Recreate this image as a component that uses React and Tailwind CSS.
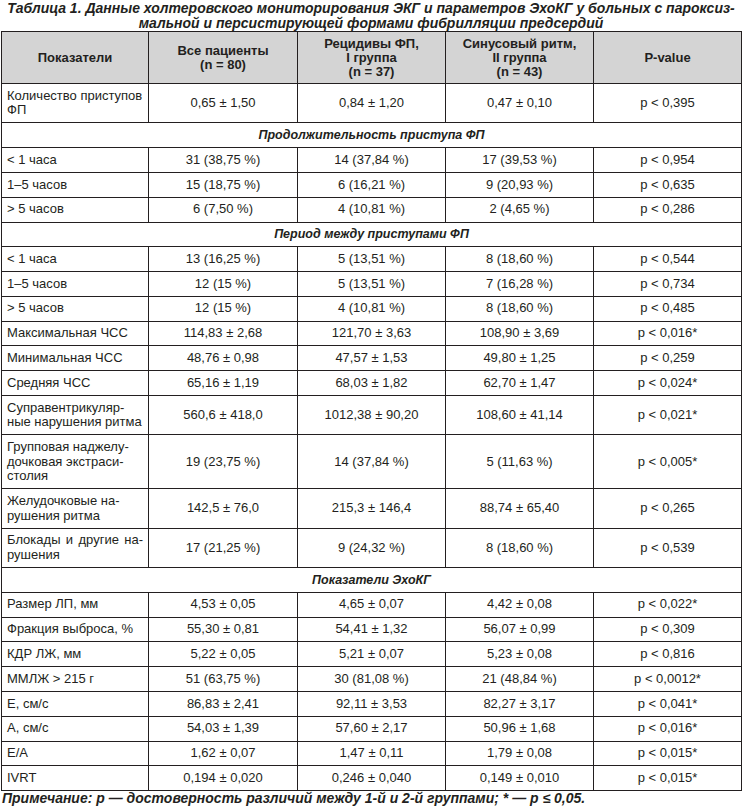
const header = [
  ['Показатели'],
  ['Все пациенты', '(n = 80)'],
  ['Рецидивы ФП,', 'I группа', '(n = 37)'],
  ['Синусовый ритм,', 'II группа', '(n = 43)'],
  ['P-value'],
]

const rows = [
  { label: ['Количество приступов', 'ФП'], v: ['0,65 ± 1,50', '0,84 ± 1,20', '0,47 ± 0,10', 'p < 0,395'] },
  { section: 'Продолжительность приступа ФП' },
  { label: ['< 1 часа'], v: ['31 (38,75 %)', '14 (37,84 %)', '17 (39,53 %)', 'p < 0,954'] },
  { label: ['1–5 часов'], v: ['15 (18,75 %)', '6 (16,21 %)', '9 (20,93 %)', 'p < 0,635'] },
  { label: ['> 5 часов'], v: ['6 (7,50 %)', '4 (10,81 %)', '2 (4,65 %)', 'p < 0,286'] },
  { section: 'Период между приступами ФП' },
  { label: ['< 1 часа'], v: ['13 (16,25 %)', '5 (13,51 %)', '8 (18,60 %)', 'p < 0,544'] },
  { label: ['1–5 часов'], v: ['12 (15 %)', '5 (13,51 %)', '7 (16,28 %)', 'p < 0,734'] },
  { label: ['> 5 часов'], v: ['12 (15 %)', '4 (10,81 %)', '8 (18,60 %)', 'p < 0,485'] },
  { label: ['Максимальная ЧСС'], v: ['114,83 ± 2,68', '121,70 ± 3,63', '108,90 ± 3,69', 'p < 0,016*'] },
  { label: ['Минимальная ЧСС'], v: ['48,76 ± 0,98', '47,57 ± 1,53', '49,80 ± 1,25', 'p < 0,259'] },
  { label: ['Средняя ЧСС'], v: ['65,16 ± 1,19', '68,03 ± 1,82', '62,70 ± 1,47', 'p < 0,024*'] },
  { label: ['Суправентрикуляр-', 'ные нарушения ритма'], v: ['560,6 ± 418,0', '1012,38 ± 90,20', '108,60 ± 41,14', 'p < 0,021*'] },
  { label: ['Групповая наджелу-', 'дочковая экстраси-', 'столия'], v: ['19 (23,75 %)', '14 (37,84 %)', '5 (11,63 %)', 'p < 0,005*'] },
  { label: ['Желудочковые на-', 'рушения ритма'], v: ['142,5 ± 76,0', '215,3 ± 146,4', '88,74 ± 65,40', 'p < 0,265'] },
  { label: ['Блокады и другие на-', 'рушения'], justify: true, v: ['17 (21,25 %)', '9 (24,32 %)', '8 (18,60 %)', 'p < 0,539'] },
  { section: 'Показатели ЭхоКГ' },
  { label: ['Размер ЛП, мм'], v: ['4,53 ± 0,05', '4,65 ± 0,07', '4,42 ± 0,08', 'p < 0,022*'] },
  { label: ['Фракция выброса, %'], v: ['55,30 ± 0,81', '54,41 ± 1,32', '56,07 ± 0,99', 'p < 0,309'] },
  { label: ['КДР ЛЖ, мм'], v: ['5,22 ± 0,05', '5,21 ± 0,07', '5,23 ± 0,08', 'p < 0,816'] },
  { label: ['ММЛЖ > 215 г'], v: ['51 (63,75 %)', '30 (81,08 %)', '21 (48,84 %)', 'p < 0,0012*'] },
  { label: ['E, см/с'], v: ['86,83 ± 2,41', '92,11 ± 3,53', '82,27 ± 3,17', 'p < 0,041*'] },
  { label: ['A, см/с'], v: ['54,03 ± 1,39', '57,60 ± 2,17', '50,96 ± 1,68', 'p < 0,016*'] },
  { label: ['E/A'], v: ['1,62 ± 0,07', '1,47 ± 0,11', '1,79 ± 0,08', 'p < 0,015*'] },
  { label: ['IVRT'], v: ['0,194 ± 0,020', '0,246 ± 0,040', '0,149 ± 0,010', 'p < 0,015*'] },
]

const cell = 'border border-[#231f20] px-[5px] py-[4.6px] leading-[14.6px] align-middle'

export default function App() {
  return (
    <div className="w-[742px] bg-white text-[#231f20] font-['Liberation_Sans',Arial,sans-serif]">
      {/* заголовок таблицы */}
      <div className="flex h-[31px] flex-col items-center pt-[1px] text-[14px] leading-[15px] font-bold italic whitespace-nowrap">
        <span>Таблица 1. Данные холтеровского мониторирования ЭКГ и параметров ЭхоКГ у больных с пароксиз-</span>
        <span>мальной и персистирующей формами фибрилляции предсердий</span>
      </div>

      <table className="ml-[1px] w-[740px] table-fixed border-collapse text-[13px]">
        <colgroup>
          <col className="w-[147px]" />
          <col className="w-[149px]" />
          <col className="w-[148px]" />
          <col className="w-[148px]" />
          <col className="w-[148px]" />
        </colgroup>
        <thead>
          <tr className="h-[52px] bg-[#d4d4d4]">
            {header.map((lines, i) => (
              <th key={i} className="border border-[#231f20] px-[5px] align-middle text-center text-[13px] leading-[14px] font-bold">
                {lines.map((l, j) => (
                  <div key={j}>{l}</div>
                ))}
              </th>
            ))}
          </tr>
        </thead>
        <tbody>
          {rows.map((r, i) =>
            r.section ? (
              <tr key={i}>
                <td colSpan={5} className={`${cell} text-center text-[12.5px] font-bold italic`}>
                  {r.section}
                </td>
              </tr>
            ) : (
              <tr key={i}>
                <td className={`${cell} text-left`}>
                  {r.label.map((l, j) => (
                    <div key={j} className={r.justify && j === 0 ? 'text-justify [text-align-last:justify]' : ''}>
                      {l}
                    </div>
                  ))}
                </td>
                {r.v.map((v, j) => (
                  <td key={j} className={`${cell} text-center`}>
                    {v}
                  </td>
                ))}
              </tr>
            )
          )}
        </tbody>
      </table>

      <div className="pl-[2px] text-[14px] leading-[15px] font-bold italic whitespace-nowrap">
        Примечание: p — достоверность различий между 1-й и 2-й группами; * — p ≤ 0,05.
      </div>
    </div>
  )
}
